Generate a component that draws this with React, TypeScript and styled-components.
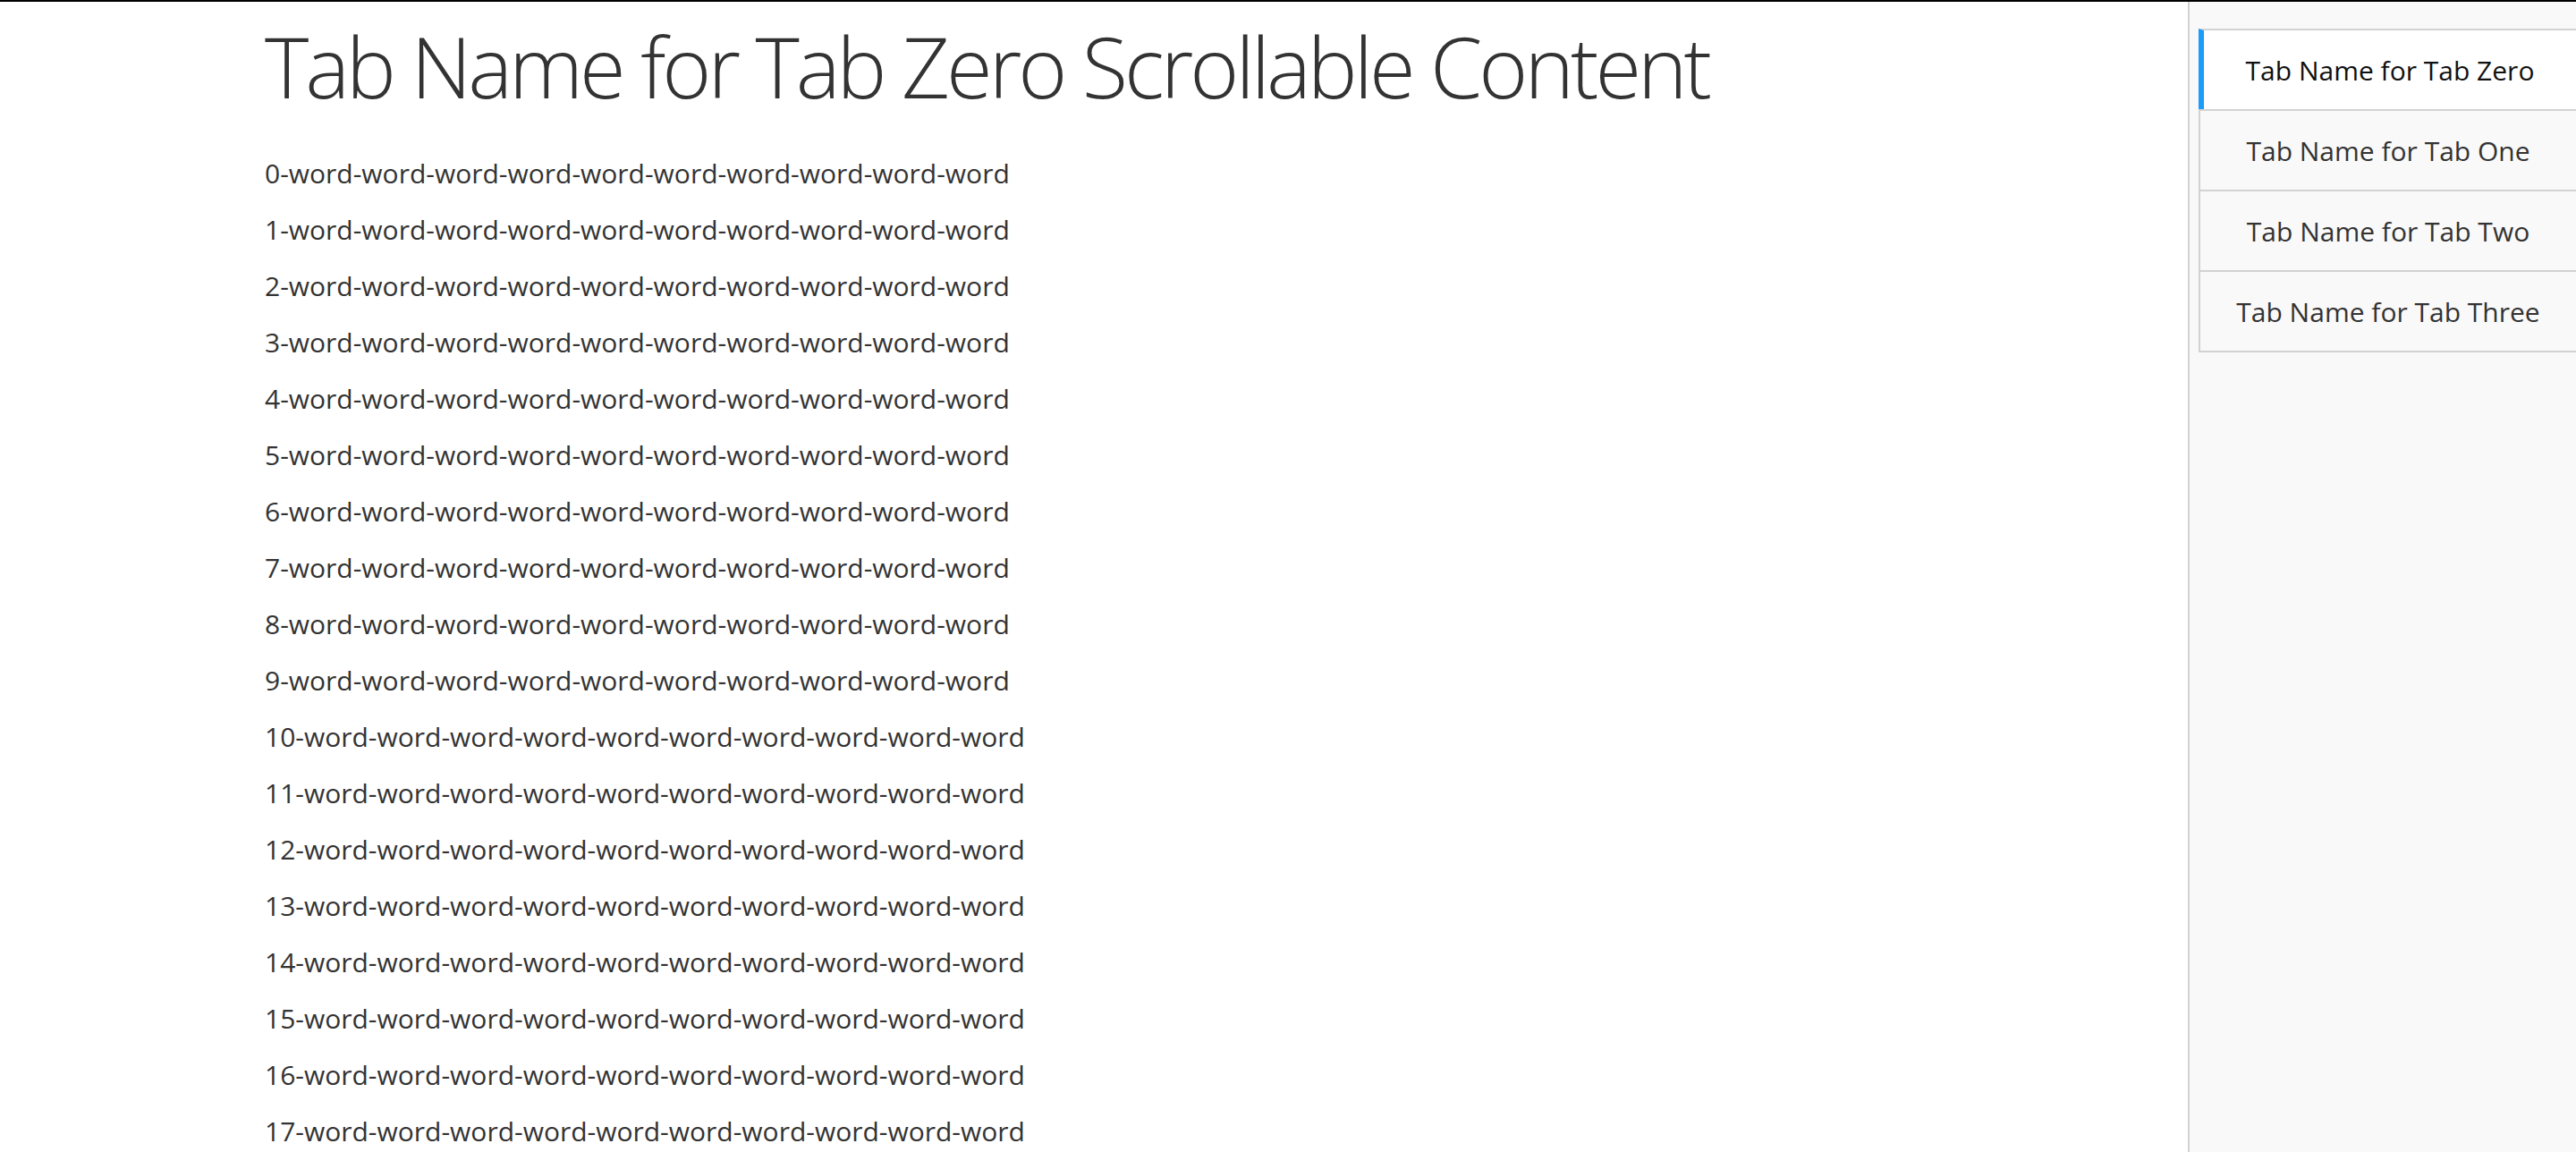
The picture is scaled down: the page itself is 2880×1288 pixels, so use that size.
import React from "react";
import styled, { createGlobalStyle } from "styled-components";

const GlobalStyle = createGlobalStyle`
  html, body {
    margin: 0;
    padding: 0;
    background: #ffffff;
  }
  body {
    font-family: "Open Sans", "Liberation Sans", sans-serif;
    color: #333333;
  }
  * { box-sizing: border-box; }
`;

const Page = styled.div`
  display: flex;
  height: 1288px;
  overflow: hidden;
  border-top: 2px solid #000000;
`;

const Main = styled.main`
  flex: 1;
  padding: 16px 0 0 296px;
  overflow: hidden;
`;

const Heading = styled.h1`
  margin: 0 0 42px 0;
  font-family: "Open Sans", "Liberation Sans", sans-serif;
  font-weight: 300;
  font-size: 94px;
  letter-spacing: -4px;
  line-height: 1.2;
  color: #333333;
  white-space: nowrap;
`;

const Rows = styled.div`
  display: flex;
  flex-direction: column;
  gap: 21px;
`;

const Row = styled.p`
  margin: 0;
  font-size: 30px;
  line-height: 42px;
  color: #333333;
  white-space: nowrap;
`;

const Sidebar = styled.aside`
  width: 434px;
  flex-shrink: 0;
  background: #f9f9f9;
  border-left: 2px solid #d2d2d2;
  padding: 30px 0 0 10px;
`;

const TabList = styled.div`
  display: flex;
  flex-direction: column;
  border-bottom: 2px solid #d2d2d2;
`;

const Tab = styled.button<{ $active?: boolean }>`
  display: flex;
  align-items: center;
  justify-content: center;
  height: 90px;
  margin: 0;
  padding: 0;
  border: none;
  border-top: 2px solid #d2d2d2;
  border-left: ${(p) => (p.$active ? "6px solid #1b9cfc" : "2px solid #d2d2d2")};
  background: ${(p) => (p.$active ? "#ffffff" : "#f9f9f9")};
  color: ${(p) => (p.$active ? "#111111" : "#333333")};
  font-family: "Open Sans", "Liberation Sans", sans-serif;
  font-size: 30px;
  font-weight: 400;
  cursor: pointer;
  white-space: nowrap;
`;

const tabs = [
  "Tab Name for Tab Zero",
  "Tab Name for Tab One",
  "Tab Name for Tab Two",
  "Tab Name for Tab Three",
];

export default function App() {
  const rows = Array.from({ length: 18 }, (_, i) =>
    `${i}-` + Array.from({ length: 10 }, () => "word").join("-")
  );
  return (
    <>
      <GlobalStyle />
      <Page>
        <Main>
          <Heading>Tab Name for Tab Zero Scrollable Content</Heading>
          <Rows>
            {rows.map((r) => (
              <Row key={r}>{r}</Row>
            ))}
          </Rows>
        </Main>
        <Sidebar>
          <TabList>
            {tabs.map((t, i) => (
              <Tab key={t} $active={i === 0}>
                {t}
              </Tab>
            ))}
          </TabList>
        </Sidebar>
      </Page>
    </>
  );
}
